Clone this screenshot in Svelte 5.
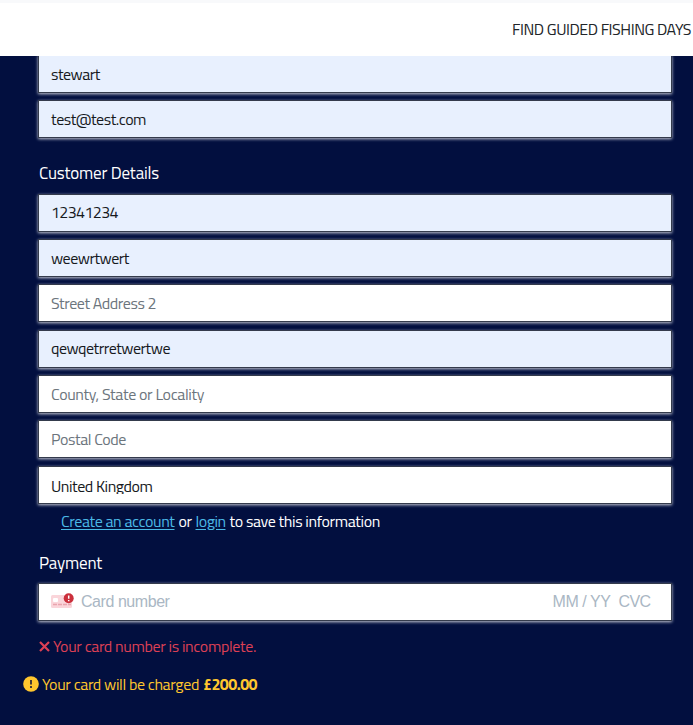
<script>
  const contact = [
    { text: 'stewart', width: 49, filled: true },
    { text: 'test@test.com', width: 95, filled: true }
  ];
  const details = [
    { text: '12341234', width: 67, filled: true },
    { text: 'weewrtwert', width: 78, filled: true },
    { text: 'Street Address 2', width: 105, hint: true },
    { text: 'qewqetrretwertwe', width: 119, filled: true },
    { text: 'County, State or Locality', width: 153, hint: true },
    { text: 'Postal Code', width: 75, hint: true },
    { text: 'United Kingdom', width: 101.5, select: true }
  ];

  // Spreads or tightens the letters so that a label fills the given width.
  function fit(node, width) {
    const gap = (width - node.getBoundingClientRect().width) / node.textContent.length;
    node.style.letterSpacing = `${gap}px`;
  }
</script>

{#snippet field(item)}
  <div class="field" class:filled={item.filled} class:hint={item.hint} class:select={item.select}>
    <span class="value"><span use:fit={item.width}>{item.text}</span></span>
  </div>
{/snippet}

<div class="page">
  <header><span use:fit={179}>FIND GUIDED FISHING DAYS</span></header>
  <main>
    <section class="contact">
      {#each contact as item}{@render field(item)}{/each}
    </section>
    <h2 class="customer"><span use:fit={120}>Customer Details</span></h2>
    <section class="details">
      {#each details as item}{@render field(item)}{/each}
    </section>
    <p class="account">
      <a href="#create"><span use:fit={113.5}>Create an account</span></a>
      <span use:fit={13}>or</span>
      <a href="#login"><span use:fit={30}>login</span></a>
      <span use:fit={150.5}>to save this information</span>
    </p>
    <h2 class="payment"><span use:fit={63}>Payment</span></h2>
    <div class="field card">
      <svg class="cardicon" width="24" height="16" viewBox="0 0 24 16">
        <rect x="0" y="2" width="21" height="13" rx="1.5" fill="#fad5da" />
        <rect x="2" y="5" width="5" height="4" rx="1" fill="#fff" />
        <path d="M2 11.5h4m1 0h4m1 0h4m1 0h3" stroke="#e9a5ae" stroke-width="1.3" />
        <circle cx="17.7" cy="5.3" r="5" fill="#cb2f3b" />
        <path d="M17.7 2.4v3.3M17.7 7v1.3" stroke="#fff" stroke-width="1.5" />
      </svg>
      <span class="number" use:fit={88.5}>Card number</span>
      <span class="expiry" use:fit={58}>MM / YY</span>
      <span class="cvc" use:fit={32}>CVC</span>
    </div>
    <p class="error">
      <svg width="11" height="11" viewBox="0 0 11 11"><path d="M1 1l9 9M10 1l-9 9" stroke="#dc4055" stroke-width="2.2" /></svg>
      <span use:fit={203}>Your card number is incomplete.</span>
    </p>
    <p class="charge">
      <svg width="16" height="16" viewBox="0 0 16 16">
        <circle cx="8" cy="8" r="7.8" fill="#ffc62e" />
        <path d="M8 4v4.5M8 10v2" stroke="#25233a" stroke-width="1.7" />
      </svg>
      <span use:fit={157}>Your card will be charged</span>
      <strong use:fit={54}>£200.00</strong>
    </p>
  </main>
</div>

<style>
  :global(body) { margin: 0; }
  .page {
    height: 725px;
    overflow: hidden;
    display: flex;
    flex-direction: column;
    background: #020f3f;
    color: #fff;
    font-family: "Titillium Web", Roboto, "Noto Sans", sans-serif;
    font-size: 16px;
    line-height: 20px;
  }
  span, strong { white-space: nowrap; }
  header {
    flex: none;
    box-sizing: border-box;
    height: 56px;
    padding: 19px 2px 0 0;
    border-top: 3px solid #f8f9fb;
    display: flex;
    justify-content: flex-end;
    align-items: flex-start;
    background: #fff;
    color: #212529;
    line-height: 14px;
  }
  main {
    flex: 1;
    min-height: 0;
    overflow: hidden;
    padding: 0 21px 0 38px;
    display: flex;
    flex-direction: column;
  }
  section { display: flex; flex-direction: column; gap: 7.35px; }
  .contact { margin-top: -.9px; }
  .field {
    flex: none;
    box-sizing: border-box;
    height: 38px;
    padding: 0 12px;
    border: 1px solid #343b4c;
    display: flex;
    align-items: center;
    background: #fff;
    color: #16191d;
    box-shadow: 0 1px 3px rgba(255, 255, 255, .8);
  }
  .filled { background: #e8f0fe; }
  .value { margin-top: -.5px; }
  .hint { color: #6c757d; }
  .select .value { height: 16px; margin-top: 2px; overflow: hidden; line-height: 17px; }
  h2 { margin: 0; font-size: 17px; font-weight: 400; line-height: 20px; }
  .customer { margin: 24.9px 0 10.2px; padding-left: 1px; }
  .account { display: flex; gap: 4px; margin: 7.5px 0 0; padding-left: 23px; }
  .account a { color: #4bb9e6; text-decoration: underline; text-underline-offset: 2px; }
  .payment { margin: 21.5px 0 10.3px; padding-left: 1px; }
  .card { color: #aab7c4; font-family: "Liberation Sans", Arial, sans-serif; font-size: 16px; }
  .cardicon { margin: -1px 6px 0 0; }
  .expiry { margin-left: auto; }
  .cvc { margin: 0 8.5px 0 8px; }
  p { display: flex; align-items: center; margin: 0; }
  .error { margin-top: 15.5px; padding-left: 1px; gap: 3px; color: #dc4055; }
  .charge { margin: 18px 0 0 -15px; color: #ffc62e; }
  .charge span { margin: 0 4px 0 3px; }
  strong { font-weight: 700; }
</style>
